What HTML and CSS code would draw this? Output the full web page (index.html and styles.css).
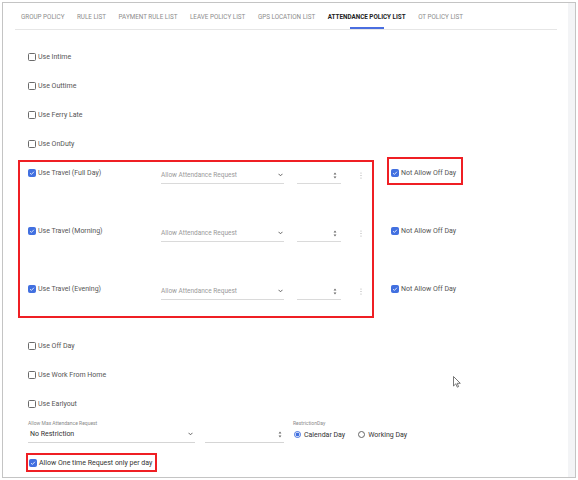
FILE: index.html
```html
<!DOCTYPE html>
<html>
<head>
<meta charset="utf-8">
<link rel="stylesheet" href="styles.css">
</head>
<body>
<div class="frame">
  <div class="panel">
    <nav class="tabs">
      <span class="tab">GROUP POLICY</span>
      <span class="tab">RULE LIST</span>
      <span class="tab">PAYMENT RULE LIST</span>
      <span class="tab">LEAVE POLICY LIST</span>
      <span class="tab">GPS LOCATION LIST</span>
      <span class="tab active">ATTENDANCE POLICY LIST</span>
      <span class="tab">OT POLICY LIST</span>
    </nav>
    <div class="content">
      <label class="row"><span class="cb"></span><span>Use Intime</span></label>
      <label class="row"><span class="cb"></span><span>Use Outtime</span></label>
      <label class="row"><span class="cb"></span><span>Use Ferry Late</span></label>
      <label class="row"><span class="cb"></span><span>Use OnDuty</span></label>

      <div class="travel">
        <div class="tbox">
          <div class="trow">
            <label class="tlabel"><span class="cb on"><svg viewBox="0 0 8 8" width="6" height="6"><path d="M1.4 4.2 L3.2 5.9 L6.6 2.3" stroke="#fff" stroke-width="1.1" fill="none"/></svg></span><span>Use Travel (Full Day)</span></label>
            <div class="select"><span>Allow Attendance Request</span><svg class="chev" width="5" height="4" viewBox="0 0 5 4"><path d="M0.5 0.8 L2.5 2.8 L4.5 0.8" stroke="#555" stroke-width="0.9" fill="none"/></svg></div>
            <div class="num"><svg width="4" height="7" viewBox="0 0 4 7"><path d="M2 0.6 L3.4 2.6 H0.6Z M2 6.4 L3.4 4.4 H0.6Z" fill="#666"/></svg></div>
            <span class="kebab"><svg width="2" height="7" viewBox="0 0 2 7"><circle cx="1" cy="1" r="0.6" fill="#aaa"/><circle cx="1" cy="3.5" r="0.6" fill="#aaa"/><circle cx="1" cy="6" r="0.6" fill="#aaa"/></svg></span>
          </div>
          <div class="trow">
            <label class="tlabel"><span class="cb on"><svg viewBox="0 0 8 8" width="6" height="6"><path d="M1.4 4.2 L3.2 5.9 L6.6 2.3" stroke="#fff" stroke-width="1.1" fill="none"/></svg></span><span>Use Travel (Morning)</span></label>
            <div class="select"><span>Allow Attendance Request</span><svg class="chev" width="5" height="4" viewBox="0 0 5 4"><path d="M0.5 0.8 L2.5 2.8 L4.5 0.8" stroke="#555" stroke-width="0.9" fill="none"/></svg></div>
            <div class="num"><svg width="4" height="7" viewBox="0 0 4 7"><path d="M2 0.6 L3.4 2.6 H0.6Z M2 6.4 L3.4 4.4 H0.6Z" fill="#666"/></svg></div>
            <span class="kebab"><svg width="2" height="7" viewBox="0 0 2 7"><circle cx="1" cy="1" r="0.6" fill="#aaa"/><circle cx="1" cy="3.5" r="0.6" fill="#aaa"/><circle cx="1" cy="6" r="0.6" fill="#aaa"/></svg></span>
          </div>
          <div class="trow">
            <label class="tlabel"><span class="cb on"><svg viewBox="0 0 8 8" width="6" height="6"><path d="M1.4 4.2 L3.2 5.9 L6.6 2.3" stroke="#fff" stroke-width="1.1" fill="none"/></svg></span><span>Use Travel (Evening)</span></label>
            <div class="select"><span>Allow Attendance Request</span><svg class="chev" width="5" height="4" viewBox="0 0 5 4"><path d="M0.5 0.8 L2.5 2.8 L4.5 0.8" stroke="#555" stroke-width="0.9" fill="none"/></svg></div>
            <div class="num"><svg width="4" height="7" viewBox="0 0 4 7"><path d="M2 0.6 L3.4 2.6 H0.6Z M2 6.4 L3.4 4.4 H0.6Z" fill="#666"/></svg></div>
            <span class="kebab"><svg width="2" height="7" viewBox="0 0 2 7"><circle cx="1" cy="1" r="0.6" fill="#aaa"/><circle cx="1" cy="3.5" r="0.6" fill="#aaa"/><circle cx="1" cy="6" r="0.6" fill="#aaa"/></svg></span>
          </div>
        </div>
        <div class="offday">
          <label class="orow boxed"><span class="cb on"><svg viewBox="0 0 8 8" width="6" height="6"><path d="M1.4 4.2 L3.2 5.9 L6.6 2.3" stroke="#fff" stroke-width="1.1" fill="none"/></svg></span><span>Not Allow Off Day</span></label>
          <label class="orow"><span class="cb on"><svg viewBox="0 0 8 8" width="6" height="6"><path d="M1.4 4.2 L3.2 5.9 L6.6 2.3" stroke="#fff" stroke-width="1.1" fill="none"/></svg></span><span>Not Allow Off Day</span></label>
          <label class="orow"><span class="cb on"><svg viewBox="0 0 8 8" width="6" height="6"><path d="M1.4 4.2 L3.2 5.9 L6.6 2.3" stroke="#fff" stroke-width="1.1" fill="none"/></svg></span><span>Not Allow Off Day</span></label>
        </div>
      </div>

      <label class="row after"><span class="cb"></span><span>Use Off Day</span></label>
      <label class="row"><span class="cb"></span><span>Use Work From Home</span></label>
      <label class="row"><span class="cb"></span><span>Use Earlyout</span></label>

      <div class="fields">
        <div class="f1">
          <div class="flabel">Allow Max Attendance Request</div>
          <div class="fsel"><span>No Restriction</span><svg class="chev" width="5" height="4" viewBox="0 0 5 4"><path d="M0.5 0.8 L2.5 2.8 L4.5 0.8" stroke="#555" stroke-width="0.9" fill="none"/></svg></div>
        </div>
        <div class="f2">
          <div class="fnum"><svg width="4" height="7" viewBox="0 0 4 7"><path d="M2 0.6 L3.4 2.6 H0.6Z M2 6.4 L3.4 4.4 H0.6Z" fill="#666"/></svg></div>
        </div>
        <div class="f3">
          <div class="flabel">RestrictionDay</div>
          <div class="radios">
            <span class="radio on"></span><span class="rtext">Calendar Day</span>
            <span class="radio"></span><span class="rtext">Working Day</span>
          </div>
        </div>
      </div>

      <label class="onetime"><span class="cb on"><svg viewBox="0 0 8 8" width="6" height="6"><path d="M1.4 4.2 L3.2 5.9 L6.6 2.3" stroke="#fff" stroke-width="1.1" fill="none"/></svg></span><span>Allow One time Request only per day</span></label>
    </div>
  </div>
  <div class="strip"></div>
  <svg class="cursor" width="8" height="12" viewBox="0 0 8 12"><path d="M0.5 0.5 V10 L2.8 7.8 L4.3 11.2 L5.6 10.6 L4.2 7.3 H7.3Z" fill="#fff" stroke="#555" stroke-width="0.8" stroke-linejoin="round"/></svg>
</div>
</body>
</html>
```
FILE: styles.css
```css
body {
  margin: 0;
  background: #fff;
  font-family: Roboto, "Liberation Sans", sans-serif;
}

.frame {
  position: relative;
  box-sizing: border-box;
  width: 574px;
  height: 476px;
  margin: 2px 0 0 2px;
  border: 1px solid #c4c4c4;
  display: flex;
  background: #fff;
}

.panel {
  width: 565px;
  flex: none;
}

.strip {
  flex: 1;
  background: #f3f4f6;
}

.tabs {
  box-sizing: border-box;
  display: flex;
  gap: 12.5px;
  margin-left: 12px;
  width: 542px;
  height: 27px;
  padding-left: 6px;
  border-bottom: 1px solid #e6e6e6;
}

.tab {
  position: relative;
  display: flex;
  align-items: center;
  padding-top: 2px;
  font-size: 6.3px;
  color: #8c8c8c;
  white-space: nowrap;
}

.tab.active {
  color: #222;
  font-weight: 700;
}

.tab.active::after {
  content: "";
  position: absolute;
  left: 50%;
  bottom: 0;
  width: 34px;
  margin-left: -17px;
  height: 2px;
  background: #4a6ee0;
}

.content {
  padding: 6px 0 0 25px;
  display: flex;
  flex-direction: column;
  align-items: flex-start;
}

.row {
  display: flex;
  align-items: center;
  gap: 2px;
  height: 16px;
  margin-top: 13px;
  font-size: 7px;
  color: #555;
}

.row.after {
  margin-top: 20px;
}

.cb {
  box-sizing: border-box;
  width: 8px;
  height: 8px;
  flex: none;
  border: 1px solid #6b6b6b;
  border-radius: 1.5px;
  display: flex;
  align-items: center;
  justify-content: center;
}

.cb.on {
  background: #4270e0;
  border-color: #4270e0;
}

.travel {
  display: flex;
  align-items: flex-start;
  margin-top: 8px;
}

.tbox {
  box-sizing: border-box;
  width: 356px;
  margin-left: -10px;
  border: 2px solid #ef1f24;
  padding: 3px 0 19px 8px;
  display: flex;
  flex-direction: column;
  gap: 42px;
}

.trow {
  display: flex;
  align-items: flex-start;
  height: 16px;
}

.tlabel {
  width: 133px;
  height: 16px;
  flex: none;
  display: flex;
  align-items: center;
  gap: 2px;
  font-size: 7px;
  color: #555;
}

.select {
  box-sizing: border-box;
  width: 123px;
  height: 17px;
  margin-top: 2px;
  padding-right: 1px;
  border-bottom: 1px solid #dadada;
  display: flex;
  align-items: center;
  justify-content: space-between;
  font-size: 6.5px;
  color: #9a9a9a;
}

.num {
  box-sizing: border-box;
  width: 44px;
  height: 17px;
  margin-top: 2px;
  margin-left: 13px;
  padding-right: 4px;
  border-bottom: 1px solid #dadada;
  display: flex;
  align-items: center;
  justify-content: flex-end;
}

.kebab {
  display: flex;
  margin-left: 19px;
  margin-top: 7px;
}

.offday {
  margin-left: 17px;
  padding-top: 5px;
  display: flex;
  flex-direction: column;
  gap: 42px;
}

.orow {
  display: flex;
  align-items: center;
  gap: 2px;
  height: 16px;
  font-size: 7px;
  color: #555;
  white-space: nowrap;
}

.orow.boxed {
  box-sizing: border-box;
  width: 76px;
  height: 28px;
  margin: -8px 0 -4px -4px;
  padding: 6px 2px 2px 2px;
  border: 2px solid #ef1f24;
}

.fields {
  display: flex;
  align-items: flex-end;
  margin-top: 8px;
}

.flabel {
  height: 6px;
  line-height: 6px;
  font-size: 5px;
  color: #8a8a8a;
  white-space: nowrap;
}

.f1 {
  width: 167px;
}

.fsel {
  box-sizing: border-box;
  height: 17px;
  padding: 0 2px 0 2px;
  border-bottom: 1px solid #d5d5d5;
  display: flex;
  align-items: center;
  justify-content: space-between;
  font-size: 7px;
  color: #333;
}

.f2 {
  width: 79px;
  margin-left: 10px;
}

.fnum {
  box-sizing: border-box;
  height: 17px;
  padding-right: 2px;
  border-bottom: 1px solid #d5d5d5;
  display: flex;
  align-items: center;
  justify-content: flex-end;
}

.f3 {
  margin-left: 9px;
}

.radios {
  height: 17px;
  display: flex;
  align-items: center;
  padding-left: 1px;
  font-size: 7px;
  color: #333;
}

.radio {
  box-sizing: border-box;
  width: 7px;
  height: 7px;
  border-radius: 50%;
  border: 1px solid #666;
  flex: none;
}

.radio.on {
  border-color: #4270e0;
  background: radial-gradient(circle, #4270e0 0 1.8px, #fff 2.1px);
}

.rtext {
  margin-left: 3px;
  margin-right: 13px;
}

.onetime {
  box-sizing: border-box;
  width: 131px;
  height: 19px;
  margin-top: 10px;
  margin-left: -2px;
  padding-left: 1px;
  border: 2px solid #ef1f24;
  display: flex;
  align-items: center;
  gap: 2px;
  font-size: 7px;
  color: #333;
  white-space: nowrap;
}

.cursor {
  position: absolute;
  left: 450px;
  top: 373px;
}
```
